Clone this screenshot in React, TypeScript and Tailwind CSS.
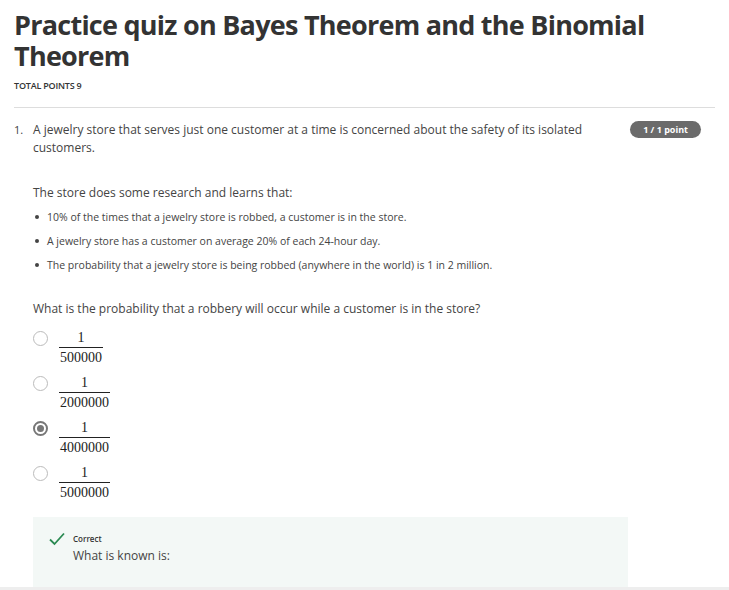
import React from 'react';

const font = { fontFamily: '"Open Sans", "Liberation Sans", sans-serif' };

const options = [
  { den: '500000', selected: false },
  { den: '2000000', selected: false },
  { den: '4000000', selected: true },
  { den: '5000000', selected: false },
];

const facts = [
  '10% of the times that a jewelry store is robbed, a customer is in the store.',
  'A jewelry store has a customer on average 20% of each 24-hour day.',
  'The probability that a jewelry store is being robbed (anywhere in the world) is 1 in 2 million.',
];

function Radio({ selected }: { selected: boolean }) {
  return (
    <div
      className={`h-[15px] w-[15px] rounded-full border flex items-center justify-center ${
        selected ? 'border-[#777] border-2' : 'border-[#bbb]'
      }`}
    >
      {selected && <div className="h-[7px] w-[7px] rounded-full bg-[#777]" />}
    </div>
  );
}

function Fraction({ den }: { den: string }) {
  return (
    <div className="inline-flex flex-col items-center font-['Liberation_Serif',serif] text-[14px] text-[#222]">
      <span className="leading-[19px]">1</span>
      <span className="border-t border-[#222] px-[1px] pt-[1px] leading-[17px]">{den}</span>
    </div>
  );
}

export default function App() {
  return (
    <div className="h-[590px] w-[729px] overflow-hidden bg-white relative" style={font}>
      <div className="pl-[14px] pr-[14px] pt-[9px]">
        <h1 className="text-[27px] leading-[31px] font-bold text-[#333] tracking-[-0.75px]">
          Practice quiz on Bayes Theorem and the Binomial Theorem
        </h1>
        <div className="mt-[8px] text-[9px] font-semibold text-[#333] tracking-[-0.2px]">TOTAL POINTS 9</div>
        <div className="mt-[14px] border-t border-[#ddd]" />

        <div className="mt-[13px] flex">
          <div className="w-[19px] text-[11px] leading-[18px] text-[#444]">1.</div>
          <div className="flex-1">
            <div className="flex items-start justify-between">
              <p className="w-[556px] text-[12px] leading-[18px] text-[#444]">
                A jewelry store that serves just one customer at a time is concerned about the safety of its isolated customers.
              </p>
              <span className="mr-[14px] rounded-full bg-[#6b6b6b] px-[13px] py-[2px] text-[9px] font-bold leading-[13px] text-white">
                1 / 1 point
              </span>
            </div>

            <p className="mt-[27px] text-[12px] leading-[18px] text-[#444]">The store does some research and learns that:</p>
            <ul className="mt-[6px] flex flex-col gap-[6px]">
              {facts.map((f) => (
                <li key={f} className="flex items-center text-[10.5px] leading-[18px] text-[#444]">
                  <span className="ml-[2px] mr-[8px] h-[4px] w-[4px] rounded-full bg-[#444]" />
                  {f}
                </li>
              ))}
            </ul>

            <p className="mt-[26px] text-[12px] leading-[18px] text-[#444]">
              What is the probability that a robbery will occur while a customer is in the store?
            </p>
            <div className="mt-[10px] flex flex-col gap-[7px]">
              {options.map((o) => (
                <div key={o.den} className="flex items-start gap-[11px]">
                  <div className="pt-[3px]">
                    <Radio selected={o.selected} />
                  </div>
                  <Fraction den={o.den} />
                </div>
              ))}
            </div>
          </div>
        </div>

        <div className="mt-[16px] ml-[19px] w-[595px] h-[80px] bg-[#f3f8f6] pt-[15px] pl-[16px]">
          <div className="flex items-center gap-[8px]">
            <svg width="16" height="14" viewBox="0 0 16 14" fill="none">
              <path d="M1 7.5 L5.5 12 L15 1.5" stroke="#2a8a52" strokeWidth="1.8" />
            </svg>
            <span className="text-[8px] font-semibold text-[#333]">Correct</span>
          </div>
          <p className="mt-[1px] ml-[24px] text-[12px] leading-[18px] text-[#444]">What is known is:</p>
        </div>
      </div>
      <div className="absolute bottom-0 left-0 right-0 h-[3px] bg-[#eee]" />
    </div>
  );
}
